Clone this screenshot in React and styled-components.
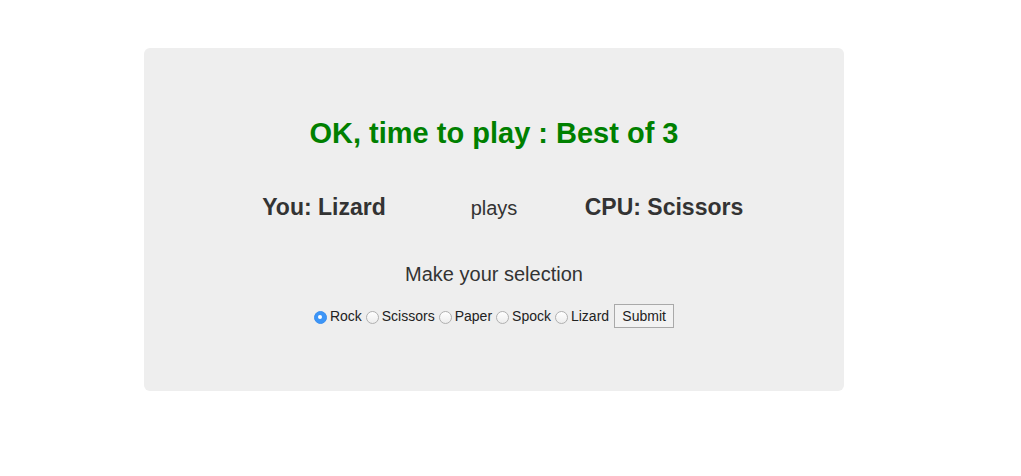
import React, { useState } from "react";
import styled, { createGlobalStyle } from "styled-components";

const GlobalStyle = createGlobalStyle`
  html, body {
    margin: 0;
    padding: 0;
    background: #ffffff;
  }
  body {
    font-family: "Liberation Sans", Arial, Helvetica, sans-serif;
    color: #333333;
  }
`;

const Page = styled.div`
  padding: 48px 0 0 144px;
`;

const Card = styled.div`
  width: 700px;
  box-sizing: border-box;
  background: #eeeeee;
  border-radius: 6px;
  padding: 69px 0 63px;
  display: flex;
  flex-direction: column;
  align-items: center;
`;

const Title = styled.h2`
  margin: 0;
  font-size: 29px;
  line-height: 33px;
  font-weight: bold;
  color: #008000;
`;

const Match = styled.div`
  margin-top: 44px;
  display: grid;
  grid-template-columns: repeat(3, 170px);
  align-items: baseline;
`;

const Player = styled.div`
  text-align: center;
  font-size: ${(p) => (p.$bold ? "23px" : "20px")};
  line-height: 26px;
  font-weight: ${(p) => (p.$bold ? "bold" : "normal")};
`;

const Prompt = styled.div`
  margin-top: 42px;
  font-size: 20px;
  line-height: 22px;
`;

const Form = styled.form`
  margin-top: 19px;
  display: flex;
  align-items: center;
  height: 24px;
  font-size: 14px;
  color: #222;
`;

const Option = styled.label`
  display: flex;
  align-items: center;
  gap: 3px;
  margin-right: 4px;
  cursor: default;
`;

const Radio = styled.input.attrs({ type: "radio" })`
  appearance: none;
  -webkit-appearance: none;
  margin: 0;
  width: 13px;
  height: 13px;
  border-radius: 50%;
  box-sizing: border-box;
  border: 1px solid #b0b0b0;
  background: linear-gradient(#ffffff, #ededed);
  position: relative;
  top: 1px;

  &:checked {
    border-color: #3a8ff0;
    background: #3c95f7;
  }
  &:checked::after {
    content: "";
    position: absolute;
    left: 3.5px;
    top: 3.5px;
    width: 4px;
    height: 4px;
    border-radius: 50%;
    background: #ffffff;
  }
`;

const Submit = styled.button`
  margin-left: 1px;
  height: 24px;
  width: 60px;
  padding: 0;
  box-sizing: border-box;
  border: 1px solid #a9a9a9;
  background: #f2f2f2;
  font-family: "Liberation Sans", Arial, Helvetica, sans-serif;
  font-size: 14px;
  color: #222;
`;

const options = ["Rock", "Scissors", "Paper", "Spock", "Lizard"];

export default function App() {
  const [choice, setChoice] = useState("Rock");
  return (
    <>
      <GlobalStyle />
      <Page>
        <Card>
          <Title>OK, time to play : Best of 3</Title>
          <Match>
            <Player $bold>You: Lizard</Player>
            <Player>plays</Player>
            <Player $bold>CPU: Scissors</Player>
          </Match>
          <Prompt>Make your selection</Prompt>
          <Form onSubmit={(e) => e.preventDefault()}>
            {options.map((o) => (
              <Option key={o}>
                <Radio
                  name="sel"
                  value={o}
                  checked={choice === o}
                  onChange={() => setChoice(o)}
                />
                {o}
              </Option>
            ))}
            <Submit type="submit">Submit</Submit>
          </Form>
        </Card>
      </Page>
    </>
  );
}
